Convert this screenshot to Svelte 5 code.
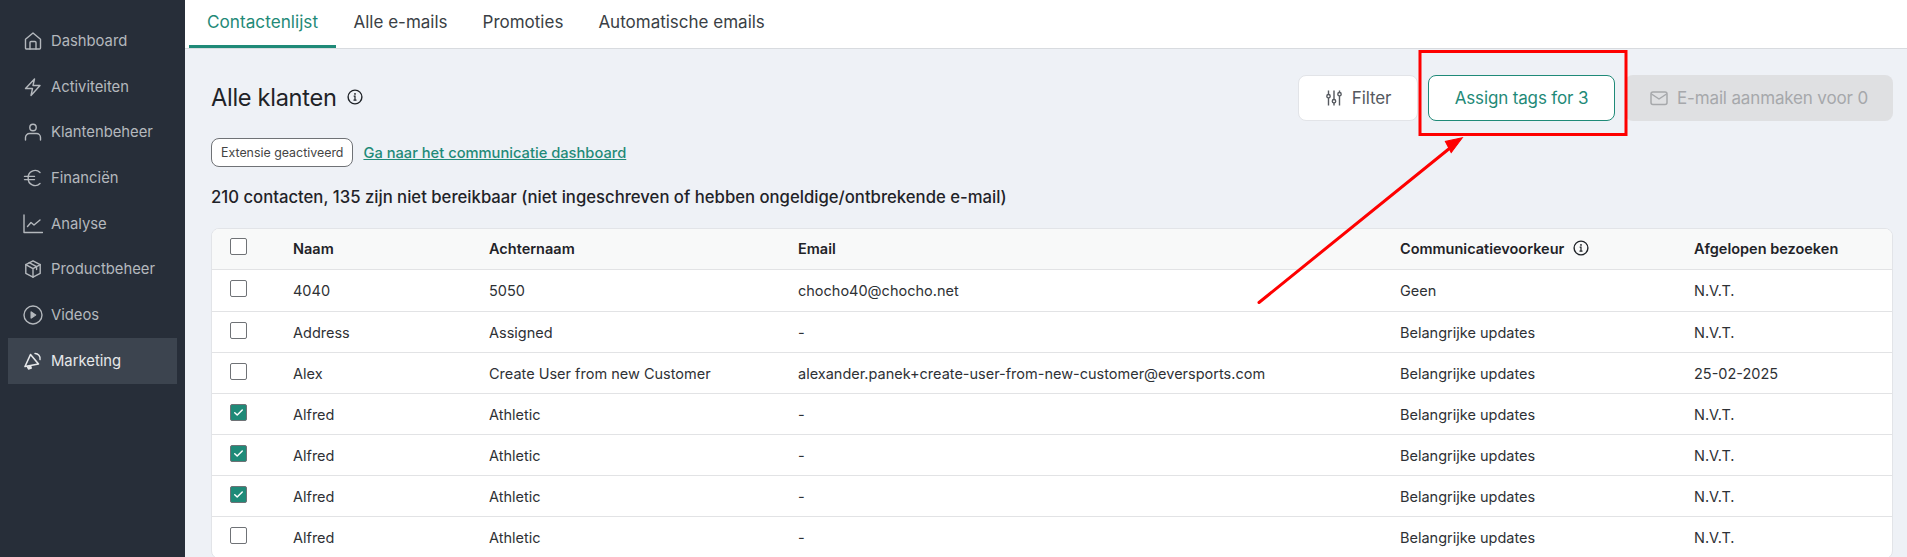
<script>
  const nav = [
    { label: 'Dashboard', icon: 'home' },
    { label: 'Activiteiten', icon: 'bolt' },
    { label: 'Klantenbeheer', icon: 'user' },
    { label: 'Financiën', icon: 'euro' },
    { label: 'Analyse', icon: 'chart' },
    { label: 'Productbeheer', icon: 'box' },
    { label: 'Videos', icon: 'play' },
    { label: 'Marketing', icon: 'horn', active: true }
  ];

  const tabs = ['Contactenlijst', 'Alle e-mails', 'Promoties', 'Automatische emails'];

  const rows = [
    { first: '4040', last: '5050', email: 'chocho40@chocho.net', pref: 'Geen', visit: 'N.V.T.' },
    { first: 'Address', last: 'Assigned', email: '-', pref: 'Belangrijke updates', visit: 'N.V.T.' },
    { first: 'Alex', last: 'Create User from new Customer', email: 'alexander.panek+create-user-from-new-customer@eversports.com', pref: 'Belangrijke updates', visit: '25-02-2025' },
    { first: 'Alfred', last: 'Athletic', email: '-', pref: 'Belangrijke updates', visit: 'N.V.T.', checked: true },
    { first: 'Alfred', last: 'Athletic', email: '-', pref: 'Belangrijke updates', visit: 'N.V.T.', checked: true },
    { first: 'Alfred', last: 'Athletic', email: '-', pref: 'Belangrijke updates', visit: 'N.V.T.', checked: true },
    { first: 'Alfred', last: 'Athletic', email: '-', pref: 'Belangrijke updates', visit: 'N.V.T.' }
  ];
</script>

{#snippet info()}
  <svg class="info" viewBox="0 0 16 16" fill="none" stroke="currentColor">
    <circle cx="8" cy="8" r="6.9" stroke-width="1.4" />
    <path d="M6.7 7.2H8v4M6.5 11.2h3" stroke-width="1.2" />
    <circle cx="8" cy="4.9" r="0.9" fill="currentColor" stroke="none" />
  </svg>
{/snippet}

<div class="page">
  <aside class="sidebar">
    {#each nav as item}
      <div class="nav-item" class:active={item.active}>
        <svg class="nav-icon" viewBox="0 0 20 20" fill="none" stroke="currentColor" stroke-width="1.4" stroke-linecap="round" stroke-linejoin="round">
          {#if item.icon === 'home'}
            <path d="M2.5 8.2 10 2l7.5 6.2V17a1 1 0 0 1-1 1h-13a1 1 0 0 1-1-1z" />
            <path d="M7 18v-6.5a1 1 0 0 1 1-1h4a1 1 0 0 1 1 1V18" />
          {:else if item.icon === 'bolt'}
            <path d="M11.5 2 2.5 11.5h7L8 18.5l9-10h-7z" />
          {:else if item.icon === 'user'}
            <circle cx="10" cy="5.5" r="3.2" />
            <path d="M2.5 18v-2.5a4 4 0 0 1 4-4h7a4 4 0 0 1 4 4V18" />
          {:else if item.icon === 'euro'}
            <path d="M17 4.4A7 7 0 0 0 5.2 10 7 7 0 0 0 17 15.6" />
            <path d="M1.5 8.4h10M1.5 11.6h10" />
          {:else if item.icon === 'chart'}
            <path d="M1 1v17.5h18.5" />
            <path d="M4.5 12.5 8 8.5l3 2.5 6-5" />
          {:else if item.icon === 'box'}
            <path d="M10 1.8 17.2 5.6v8.8L10 18.2 2.8 14.4V5.6z" />
            <path d="M2.8 5.6 10 9.6l7.2-4M10 9.6v8.6M6.2 3.6l7.4 4v3" />
          {:else if item.icon === 'play'}
            <circle cx="10" cy="10" r="9" />
            <path d="M8.2 7v6l4.4-3z" fill="currentColor" />
          {:else}
            <path d="M7.5 3.5 15.5 13 2 15.5z" stroke-width="1.6" />
            <path d="M4.2 15.5 5.5 18l2.8-.8-.8-2.4" fill="currentColor" />
            <path d="M12 2.5a5 5 0 0 1 5 6" />
          {/if}
        </svg>
        <span>{item.label}</span>
      </div>
    {/each}
  </aside>

  <main class="main">
    <nav class="tabs">
      {#each tabs as tab, i}
        <div class="tab" class:current={i === 0}>{tab}</div>
      {/each}
    </nav>

    <section class="content">
      <div class="head">
        <h1>Alle klanten {@render info()}</h1>
        <div class="actions">
          <button class="btn filter">
            <svg class="btn-icon" viewBox="0 0 18 18" fill="none" stroke="currentColor" stroke-width="1.4">
              <path d="M3.5 1.5v4M3.5 9v7.5M9 1.5v9M9 14v2.5M14.5 1.5v2M14.5 7v9.5" />
              <circle cx="3.5" cy="7.2" r="1.7" />
              <circle cx="9" cy="12.2" r="1.7" />
              <circle cx="14.5" cy="5.2" r="1.7" />
            </svg>
            Filter
          </button>
          <button class="btn assign">Assign tags for 3</button>
          <button class="btn create">
            <svg class="btn-icon" viewBox="0 0 18 18" fill="none" stroke="currentColor" stroke-width="1.5" stroke-linejoin="round">
              <rect x="1" y="3" width="16" height="12.5" rx="2" />
              <path d="m1.5 5 7.5 5 7.5-5" />
            </svg>
            E-mail aanmaken voor 0
          </button>
        </div>
      </div>

      <div class="ext">
        <span class="badge">Extensie geactiveerd</span>
        <a href="#dashboard">Ga naar het communicatie dashboard</a>
      </div>

      <p class="summary">210 contacten, 135 zijn niet bereikbaar (niet ingeschreven of hebben ongeldige/ontbrekende e-mail)</p>

      <div class="table">
        <div class="row header">
          <div class="cell check"><span class="box"></span></div>
          <div class="cell">Naam</div>
          <div class="cell">Achternaam</div>
          <div class="cell">Email</div>
          <div class="cell">Communicatievoorkeur {@render info()}</div>
          <div class="cell">Afgelopen bezoeken</div>
        </div>
        {#each rows as row}
          <div class="row">
            <div class="cell check">
              <span class="box" class:on={row.checked}>
                {#if row.checked}
                  <svg viewBox="0 0 16 16" fill="none" stroke="#fff" stroke-width="1.6" stroke-linecap="round" stroke-linejoin="round"><path d="m4 8.2 2.6 2.4L12 5.4" /></svg>
                {/if}
              </span>
            </div>
            <div class="cell">{row.first}</div>
            <div class="cell">{row.last}</div>
            <div class="cell">{row.email}</div>
            <div class="cell">{row.pref}</div>
            <div class="cell">{row.visit}</div>
          </div>
        {/each}
      </div>
    </section>
  </main>

  <!-- annotation drawn over the screenshot -->
  <svg class="annotation" viewBox="0 0 1907 557">
    <rect x="1420" y="51.5" width="206" height="83" fill="none" stroke="#fe0000" stroke-width="3" />
    <path d="M1259 302.5 1450 148" fill="none" stroke="#fe0000" stroke-width="3" stroke-linecap="round" />
    <path d="M1461.5 137 1445 142.5 1452 153z" fill="#fe0000" stroke="#fe0000" stroke-width="1" transform="rotate(6 1455 145)" />
  </svg>
</div>

<style>
  :global(body) {
    margin: 0;
    background: #eef1f6;
    overflow: hidden;
  }

  .page {
    position: relative;
    display: flex;
    width: 1907px;
    height: 557px;
    overflow: hidden;
    font-family: Inter, 'Noto Sans', sans-serif;
    color: #1f2328;
  }

  .sidebar {
    flex: 0 0 185px;
    box-sizing: border-box;
    padding: 18px 8px 0;
    background: #272e39;
    display: flex;
    flex-direction: column;
  }

  .nav-item {
    height: 45.7px;
    display: flex;
    align-items: center;
    gap: 8px;
    padding-left: 15px;
    font-size: 14.8px;
    color: #b4b8bd;
  }

  .nav-item.active {
    background: #3c444f;
    color: #e6e8ea;
  }

  .nav-icon {
    width: 20px;
    height: 20px;
    flex: none;
  }

  .main {
    flex: 1;
    min-width: 0;
  }

  .tabs {
    display: flex;
    height: 49px;
    box-sizing: border-box;
    padding-left: 4px;
    background: #fff;
    border-bottom: 1.5px solid #d8dbdf;
  }

  .tab {
    padding: 0 17.5px;
    line-height: 44px;
    font-size: 17px;
    color: #3a3f45;
  }

  .tab.current {
    padding: 0 18px;
    font-size: 17.2px;
    color: #1f8a78;
    box-shadow: inset 0 -3px 0 #1f8a78;
    height: 48px;
  }

  .content {
    padding: 26px 14px 0 26px;
  }

  .head {
    display: flex;
    justify-content: space-between;
    align-items: center;
    height: 46px;
  }

  h1 {
    margin: -2px 0 0;
    display: flex;
    align-items: center;
    gap: 10px;
    font-size: 23.6px;
    font-weight: 400;
    letter-spacing: -0.3px;
  }

  .info {
    width: 16px;
    height: 16px;
    flex: none;
  }

  .actions {
    display: flex;
    gap: 10px;
  }

  .btn {
    height: 46px;
    display: flex;
    align-items: center;
    justify-content: center;
    gap: 9px;
    box-sizing: border-box;
    border-radius: 8px;
    font-family: inherit;
    font-size: 17px;
    letter-spacing: -0.15px;
  }

  .btn-icon {
    width: 18px;
    height: 18px;
  }

  .filter {
    width: 120px;
    background: #fff;
    border: 1px solid #e2e4e8;
    color: #55595f;
  }

  .assign {
    width: 187px;
    background: #fff;
    border: 1px solid #1f8a78;
    color: #1f8a78;
  }

  .create {
    width: 268px;
    background: #dfe0e2;
    border: 0;
    color: #a6a8ab;
  }

  .ext {
    display: flex;
    align-items: center;
    gap: 10px;
    margin-top: 17px;
  }

  .badge {
    box-sizing: border-box;
    height: 29px;
    line-height: 27px;
    padding: 0 9px;
    background: #fff;
    border: 1px solid #6f7276;
    border-radius: 8px;
    font-size: 12.4px;
    color: #444;
  }

  .ext a {
    font-size: 14.7px;
    font-weight: 500;
    color: #1f8a78;
  }

  .summary {
    margin: 20px 0 0;
    height: 20px;
    line-height: 20px;
    font-size: 16.7px;
    font-weight: 500;
  }

  .table {
    margin-top: 21px;
    background: #fff;
    border: 1px solid #e2e4e8;
    border-radius: 8px;
    overflow: hidden;
  }

  .row {
    display: grid;
    grid-template-columns: 81px 196px 309px 602px 294px 1fr;
    height: 41px;
    border-bottom: 1px solid #e2e3e5;
    box-sizing: border-box;
    font-size: 14.5px;
    color: #2e3135;
  }

  .row.header {
    background: #f8f9f9;
    font-weight: 600;
    color: #1f2328;
    padding-bottom: 2px;
  }

  .row:nth-child(2) {
    height: 42px;
  }

  .cell {
    display: flex;
    align-items: center;
    gap: 9px;
    white-space: nowrap;
  }

  .check {
    padding-left: 18px;
  }

  .box {
    width: 17px;
    height: 17px;
    box-sizing: border-box;
    margin-top: -4px;
    background: #fff;
    border: 1px solid #6f7276;
    border-radius: 2px;
    display: flex;
  }

  .box.on {
    background: #1f8a78;
  }

  .annotation {
    position: absolute;
    inset: 0;
    width: 1907px;
    height: 557px;
    pointer-events: none;
  }
</style>
